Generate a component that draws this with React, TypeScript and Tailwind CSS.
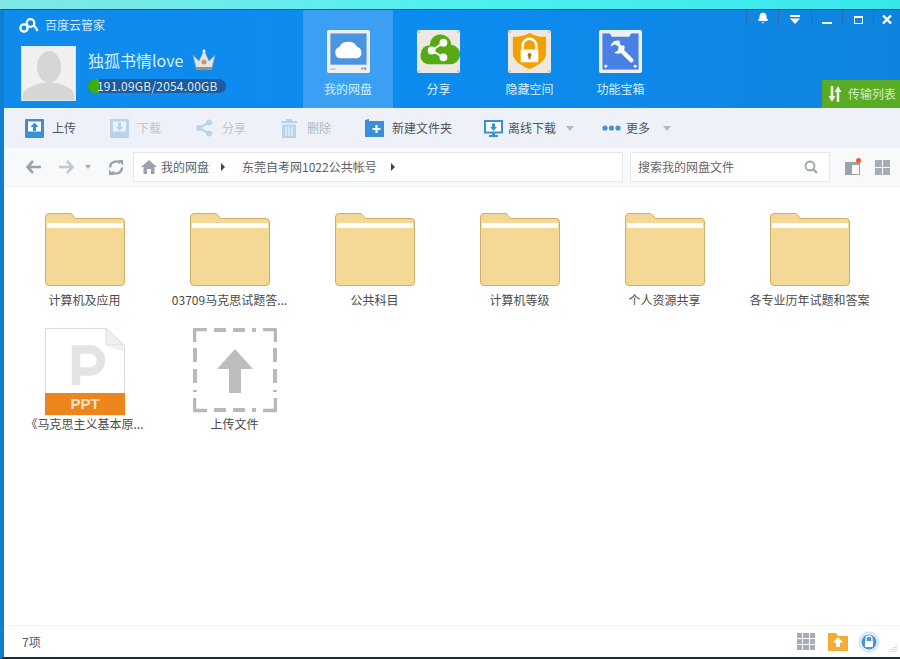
import { Bell } from "lucide-react";

const font = "font-['Noto_Sans_CJK_SC','Liberation_Sans',sans-serif]";

function Folder() {
  return (
    <svg width="82" height="80" viewBox="0 0 82 80" className="shrink-0">
      <path d="M1.500 5 Q1.500 1.500 5 1.500 H26 Q28 1.500 29 3.500 L31.500 6.500 H77 Q80.500 6.500 80.500 10 V70 Q80.500 73.500 77 73.500 H5 Q1.500 73.500 1.500 70 Z" fill="#f5d896" stroke="#cfae68" />
      <rect x="3" y="11" width="76" height="5" fill="#fff" />
    </svg>
  );
}

function PptFile() {
  return (
    <svg width="82" height="88" viewBox="0 0 82 88" className="shrink-0">
      <path d="M1.500 0.500 H62 L80.500 18 V87 H1.500 Z" fill="#fff" stroke="#dcdcdc" />
      <path d="M62 0.500 V17 H80.500 Z" fill="#f0f0f0" stroke="#dedede" />
      <path d="M63 18 H80 V24 Z" fill="#f2f2f2" />
      <path d="M32 57 V21.500 H46 A11 11 0 0 1 46 43.500 H36" fill="none" stroke="#e2e4e7" strokeWidth="8.500" />
      <rect x="1" y="65" width="80" height="22" fill="#ec851c" />
      <text x="41" y="81" textAnchor="middle" fontSize="15" fontWeight="700" fill="#fbe2c4" fontFamily="Liberation Sans">PPT</text>
    </svg>
  );
}

function UploadTile() {
  return (
    <svg width="84" height="88" viewBox="0 0 84 88" className="ml-[1px] shrink-0">
      <path d="M1.500 14 V1.500 H14" fill="none" stroke="#b9b9b9" strokeWidth="3.500" />
      <path d="M70 1.500 H82.500 V14" fill="none" stroke="#b9b9b9" strokeWidth="3.500" />
      <path d="M1.500 70 V82.500 H14" fill="none" stroke="#b9b9b9" strokeWidth="3.500" />
      <path d="M70 82.500 H82.500 V70" fill="none" stroke="#b9b9b9" strokeWidth="3.500" />
      <path d="M21 2 H63 M21 82 H63" stroke="#b9b9b9" strokeWidth="4" strokeDasharray="12 7" />
      <path d="M2 20 V64 M82 20 V64" stroke="#b9b9b9" strokeWidth="4" strokeDasharray="14 7" />
      <path d="M42 21 L60 41 H48 V65 H36 V41 H24 Z" fill="#bdbdbd" />
    </svg>
  );
}

function UploadIcon() {
  return (
    <svg width="19" height="19" viewBox="0 0 19 19">
      <rect width="19" height="19" rx="1" fill="#3a8fd6" />
      <rect x="3" y="2.500" width="13" height="10" fill="#fff" />
      <path d="M9.500 3.500 L13.500 8 H11 V12 H8 V8 H5.500 Z" fill="#3a8fd6" />
    </svg>
  );
}

function DownloadIcon() {
  return (
    <svg width="19" height="19" viewBox="0 0 19 19">
      <rect width="19" height="19" rx="1" fill="#b7d4ec" />
      <rect x="3" y="2.500" width="13" height="10" fill="#eef3f9" />
      <path d="M9.500 12 L13.500 7.500 H11 V3.500 H8 V7.500 H5.500 Z" fill="#b7d4ec" />
    </svg>
  );
}

function ShareIcon() {
  return (
    <svg width="18" height="18" viewBox="0 0 18 18">
      <path d="M14 3.500 L4 9 L14 14.500" fill="none" stroke="#b7d4ec" strokeWidth="2" />
      <circle cx="14" cy="3.500" r="3" fill="#b7d4ec" />
      <circle cx="4" cy="9" r="3" fill="#b7d4ec" />
      <circle cx="14" cy="14.500" r="3" fill="#b7d4ec" />
    </svg>
  );
}

function TrashIcon() {
  return (
    <svg width="16" height="19" viewBox="0 0 16 19">
      <path d="M0 2 H16 V4 H0 Z M5 0 H11 V2 H5 Z" fill="#b7d4ec" />
      <path d="M1 5.500 H15 V19 H1 Z" fill="#b7d4ec" />
      <path d="M5 7.500 V17 M8 7.500 V17 M11 7.500 V17" stroke="#eef3f9" strokeWidth="1.200" />
    </svg>
  );
}

function NewFolderIcon() {
  return (
    <svg width="19" height="18" viewBox="0 0 19 18">
      <path d="M0 1 L4 0 V18 H0 Z" fill="#3a8fd6" />
      <path d="M4 2 H19 V18 H4 Z" fill="#3a8fd6" />
      <path d="M11.500 6 V14 M7.500 10 H15.500" stroke="#fff" strokeWidth="2.200" />
    </svg>
  );
}

function OfflineIcon() {
  return (
    <svg width="19" height="17" viewBox="0 0 19 17">
      <rect x="1" y="1" width="17" height="11.500" fill="#fff" stroke="#3a8fd6" strokeWidth="2" />
      <path d="M9.500 11 L13 7 H11 V3.500 H8 V7 H6 Z" fill="#3a8fd6" />
      <path d="M8 13 H11 V15 H14 V17 H5 V15 H8 Z" fill="#3a8fd6" />
    </svg>
  );
}

function MoreDots() {
  return (
    <svg width="19" height="6" viewBox="0 0 19 6">
      <circle cx="3" cy="3" r="2.600" fill="#4a90d0" />
      <circle cx="9.500" cy="3" r="2.600" fill="#4a90d0" />
      <circle cx="16" cy="3" r="2.600" fill="#4a90d0" />
    </svg>
  );
}

function Caret() {
  return <span className="h-0 w-0 border-x-[4px] border-t-[5px] border-x-transparent border-t-[#b4b8bd]" />;
}

function CrumbArrow() {
  return <span className="h-0 w-0 border-y-[4px] border-l-[4px] border-y-transparent border-l-[#444]" />;
}

function TileDots() {
  return (
    <>
      <circle cx="2" cy="2" r="0.800" fill="#9a9a9a" />
      <circle cx="42" cy="2" r="0.800" fill="#9a9a9a" />
      <circle cx="2" cy="42" r="0.800" fill="#9a9a9a" />
      <circle cx="42" cy="42" r="0.800" fill="#9a9a9a" />
    </>
  );
}

function CloudTile() {
  return (
    <svg width="43" height="43" viewBox="0 0 44 44">
      <rect width="44" height="44" rx="2" fill="#eef0f2" />
      <rect x="3.500" y="3.500" width="37" height="32" fill="#4a95e0" />
      <path d="M13 29 A6 6 0 0 1 12.500 17.500 A10 9 0 0 1 31 17.500 A6 6 0 0 1 31 29 Z" fill="#fff" />
      <path d="M4 39 V41 M6 39 V41 M8 39 V41" stroke="#aaa" />
      <rect x="35" y="38.500" width="2" height="2" fill="#c8736a" />
      <rect x="38" y="38.500" width="2" height="2" fill="#777" />
    </svg>
  );
}

function ShareTile() {
  return (
    <svg width="43" height="43" viewBox="0 0 44 44">
      <rect width="44" height="44" rx="2" fill="#eee8e4" />
      <TileDots />
      <path d="M11 35 A8.500 8.500 0 0 1 4 24 A8 8 0 0 1 13 16 A11 11 0 0 1 35 15 A10 10 0 0 1 33 35 Z" fill="#56ab14" />
      <path d="M27 13 L15 21 L27 28" fill="none" stroke="#fff" strokeWidth="2" />
      <circle cx="27" cy="13" r="4" fill="#fff" />
      <circle cx="15" cy="21" r="4" fill="#fff" />
      <circle cx="27" cy="28" r="4" fill="#fff" />
    </svg>
  );
}

function LockTile() {
  return (
    <svg width="43" height="43" viewBox="0 0 44 44">
      <rect width="44" height="44" rx="2" fill="#eee8e4" />
      <TileDots />
      <path d="M5 7 Q15 7 22 3 Q29 7 39 7 V24 Q39 33 22 40 Q5 33 5 24 Z" fill="#f2a200" />
      <path d="M15 20 V16 A7 7 0 0 1 29 16 V20" fill="none" stroke="#fff" strokeWidth="2.500" />
      <rect x="13" y="20" width="18" height="13" rx="1" fill="#fff" />
      <circle cx="22" cy="25.500" r="2" fill="#b07800" />
      <rect x="21" y="26" width="2" height="4" fill="#b07800" />
    </svg>
  );
}

function ToolTile() {
  return (
    <svg width="43" height="43" viewBox="0 0 44 44">
      <rect width="44" height="44" rx="2" fill="#eef0f2" />
      <rect x="3.500" y="3.500" width="37" height="37" fill="#4a7fe6" />
      <path d="M11 3 H33 L31 7 H13 Z" fill="#eef0f2" />
      <circle cx="7" cy="37" r="1.500" fill="#fff" />
      <circle cx="37" cy="37" r="1.500" fill="#fff" />
      <path d="M24 22 L33 31" stroke="#fff" strokeWidth="4.500" strokeLinecap="round" />
      <path d="M21 11 A7 7 0 0 0 12 17 L16 14.500 L20 17 L19.500 21 L15.500 23 A7 7 0 0 0 25.500 21 A7 7 0 0 0 26 16 L22 15.500 Z" fill="#fff" />
    </svg>
  );
}

const tabs = [
  { label: "我的网盘", tile: <CloudTile />, box: "w-[90px] bg-[#3ba0f4]" },
  { label: "分享", tile: <ShareTile />, box: "w-[91px]" },
  { label: "隐藏空间", tile: <LockTile />, box: "w-[91px]" },
  { label: "功能宝箱", tile: <ToolTile />, box: "w-[91px]" },
];

const files = [
  { name: "计算机及应用", icon: <Folder />, box: "" },
  { name: "03709马克思试题答...", icon: <Folder />, box: "" },
  { name: "公共科目", icon: <Folder />, box: "" },
  { name: "计算机等级", icon: <Folder />, box: "" },
  { name: "个人资源共享", icon: <Folder />, box: "" },
  { name: "各专业历年试题和答案", icon: <Folder />, box: "" },
  { name: "《马克思主义基本原...", icon: <PptFile />, box: "" },
  { name: "上传文件", icon: <UploadTile />, box: "ml-[5px]" },
];

export default function App() {
  return (
    <div className={`flex h-[659px] w-[900px] flex-col overflow-hidden bg-white text-[12px] ${font}`}>
      <div className="h-[9px] shrink-0 bg-gradient-to-r from-[#7fe6e6] via-[#4fefef] to-[#37e6ea]" />
      <div className="flex min-h-0 flex-1 flex-col border-t border-b-2 border-l-4 border-t-[#14507f] border-b-[#1c2b3a] border-l-[#0f7fd0]">
        {/* header */}
        <div className="flex h-[98px] shrink-0 bg-gradient-to-r from-[#0f8bec] via-[#0c8cf0] to-[#0f84de] text-white">
          <div className="flex w-[299px] shrink-0 flex-col pl-[15px] pt-[5px]">
            <div className="flex h-[20px] items-center gap-[6px]">
              <svg width="20" height="17" viewBox="0 0 20 17">
                <circle cx="5" cy="11" r="3.600" fill="none" stroke="#fff" strokeWidth="2.400" />
                <circle cx="11.500" cy="6" r="3.800" fill="none" stroke="#fff" strokeWidth="2.200" />
                <path d="M14.500 8 C16 9.500 17.500 11 18.500 14" fill="none" stroke="#fff" strokeWidth="2.400" />
              </svg>
              <span className="text-[12px] text-[#cfe8fb]">百度云管家</span>
            </div>
            <div className="ml-[2px] mt-[11px] flex">
              <div className="h-[55px] w-[55px] border border-[#dfe6ea] bg-[#f0f0f0]">
                <svg width="53" height="53" viewBox="0 0 53 53">
                  <ellipse cx="27" cy="20" rx="12" ry="16" fill="#d6d6d6" />
                  <path d="M1 53 V46 Q5 40 19 36 H35 Q49 40 52 46 V53 Z" fill="#d6d6d6" />
                </svg>
              </div>
              <div className="ml-[12px] flex flex-col">
                <div className="flex h-[28px] items-center">
                  <span className="text-[16px] leading-none text-[#d8effd]">独孤书情love</span>
                  <svg width="24" height="24" viewBox="0 0 24 24" className="ml-[9px]">
                    <path d="M1 7 L7 13 L12 2 L17 13 L23 7 L20 20 H4 Z" fill="#dfe5ea" stroke="#8a9aa8" strokeWidth="0.600" />
                    <rect x="4" y="19" width="16" height="3" fill="#a89060" />
                    <circle cx="12" cy="14" r="2.500" fill="#c79a6a" />
                    <circle cx="12" cy="3" r="1.500" fill="#fff" />
                  </svg>
                </div>
                <div className="mt-[5px] flex h-[14px] w-[138px] items-center rounded-full bg-[#1d5a9e]">
                  <span className="h-full w-[11px] shrink-0 rounded-l-full bg-[#3fae10]" />
                  <span className="-ml-[2px] whitespace-nowrap text-[12px] leading-[14px] tracking-[0.2px] text-[#d8effd]">191.09GB/2054.00GB</span>
                </div>
              </div>
            </div>
          </div>
          <nav className="flex">
            {tabs.map((tab) => (
              <div key={tab.label} className={`flex h-[98px] flex-col items-center pt-[20px] ${tab.box}`}>
                {tab.tile}
                <span className="mt-[8px] text-[12px] leading-[16px] text-[#d8effd]">{tab.label}</span>
              </div>
            ))}
          </nav>
          <div className="flex flex-1 flex-col items-end justify-between">
            <div className="flex h-[14px]">
              <div className="flex w-[32px] items-end justify-center border-l border-[#2a6ea8]"><Bell size={12} fill="#fff" strokeWidth={2} /></div>
              <div className="flex w-[33px] items-end justify-center border-l border-[#2a6ea8]">
                <svg width="10" height="9" viewBox="0 0 10 9"><path d="M0 1 H10" stroke="#fff" strokeWidth="2" /><path d="M0 3.500 H10 L5 9 Z" fill="#fff" /></svg>
              </div>
              <div className="flex w-[31px] items-end justify-center border-l border-[#2a6ea8]"><span className="h-[2px] w-[10px] bg-white" /></div>
              <div className="flex w-[31px] items-end justify-center border-l border-[#2a6ea8]"><span className="h-[8px] w-[9px] border border-t-2 border-white" /></div>
              <div className="flex w-[27px] items-end justify-center border-l border-[#2a6ea8]">
                <svg width="10" height="9" viewBox="0 0 10 9"><path d="M1 0.500 L9 8.500 M9 0.500 L1 8.500" stroke="#fff" strokeWidth="2.400" /></svg>
              </div>
            </div>
            <div className="flex h-[28px] w-[78px] items-center bg-[#5aab24] pl-[6px]">
              <svg width="14" height="16" viewBox="0 0 14 16">
                <path d="M4 0 V12" stroke="#f4f4e8" strokeWidth="2.500" />
                <path d="M4 16 L0.500 10 H7.500 Z" fill="#f4f4e8" />
                <path d="M10 16 V4" stroke="#f4f4e8" strokeWidth="2.500" />
                <path d="M10 0 L6.500 6 H13.500 Z" fill="#f4f4e8" />
              </svg>
              <span className="ml-[6px] whitespace-nowrap text-[12px] text-[#d8ecc8]">传输列表</span>
            </div>
          </div>
        </div>

        {/* toolbar */}
        <div className="flex h-[40px] shrink-0 items-center bg-[#eef2f8] text-[12px] text-[#4b5560]">
          <div className="ml-[21px] flex w-[85px] items-center gap-[8px]"><UploadIcon /><span>上传</span></div>
          <div className="flex w-[85px] items-center gap-[8px] text-[#c0c6cc]"><DownloadIcon /><span>下载</span></div>
          <div className="flex w-[86px] items-center gap-[9px] text-[#c0c6cc]"><ShareIcon /><span>分享</span></div>
          <div className="flex w-[84px] items-center gap-[10px] text-[#b4bac0]"><TrashIcon /><span>删除</span></div>
          <div className="flex w-[119px] items-center gap-[8px]"><NewFolderIcon /><span>新建文件夹</span></div>
          <div className="flex w-[118px] items-center gap-[5px]"><OfflineIcon /><span>离线下载</span><span className="ml-[5px] flex"><Caret /></span></div>
          <div className="flex items-center gap-[5px]"><MoreDots /><span>更多</span><span className="ml-[8px] flex"><Caret /></span></div>
        </div>

        {/* nav */}
        <div className="flex h-[39px] shrink-0 items-center border-b border-[#eef0f2] bg-[#f7f9fb]">
          <svg width="16" height="14" viewBox="0 0 16 14" className="ml-[22px]">
            <path d="M7 1 L1.500 7 L7 13 M2 7 H15" fill="none" stroke="#9aa3ab" strokeWidth="2.600" />
          </svg>
          <svg width="16" height="14" viewBox="0 0 16 14" className="ml-[16px]">
            <path d="M9 1 L14.500 7 L9 13 M14 7 H1" fill="none" stroke="#c3c9cf" strokeWidth="2.600" />
          </svg>
          <span className="ml-[11px] flex"><span className="h-0 w-0 border-x-[3.500px] border-t-[4px] border-x-transparent border-t-[#a4aab0]" /></span>
          <svg width="16" height="17" viewBox="0 0 16 17" className="ml-[17px]">
            <path d="M2 8.500 A6 6 0 0 1 12 4 M14 8.500 A6 6 0 0 1 4 13" fill="none" stroke="#9aa3ab" strokeWidth="2.400" />
            <path d="M10 1 H15 V6.500 Z M6 16 H1 V10.500 Z" fill="#9aa3ab" />
          </svg>
          <div className="ml-[9px] flex h-[30px] w-[490px] items-center border border-[#e6e8ea] bg-white pl-[7px] text-[12px] text-[#5a5f66]">
            <svg width="16" height="14" viewBox="0 0 16 14">
              <path d="M8 0 L16 7 H13.500 V14 H10 V9 H6 V14 H2.500 V7 H0 Z" fill="#9aa3ab" />
            </svg>
            <span className="ml-[4px]">我的网盘</span>
            <span className="ml-[12px] flex"><CrumbArrow /></span>
            <span className="ml-[17px]">东莞自考网1022公共帐号</span>
            <span className="ml-[14px] flex"><CrumbArrow /></span>
          </div>
          <div className="ml-[7px] flex h-[30px] w-[200px] items-center justify-between border border-[#e6e8ea] bg-white pl-[7px] pr-[11px] text-[12px] text-[#666]">
            <span>搜索我的网盘文件</span>
            <svg width="14" height="14" viewBox="0 0 14 14">
              <circle cx="6" cy="6" r="4.500" fill="none" stroke="#9aa3ab" strokeWidth="1.800" />
              <path d="M9.500 9.500 L13 13" stroke="#9aa3ab" strokeWidth="2.200" />
            </svg>
          </div>
          <div className="relative ml-[15px] flex">
            <svg width="15" height="15" viewBox="0 0 15 15">
              <path d="M0.500 2.500 H14.500 V14.500 H0.500 Z" fill="#fff" stroke="#9aa3ab" />
              <rect x="0" y="2" width="15" height="3" fill="#9aa3ab" />
              <rect x="0" y="5" width="7" height="10" fill="#9aa3ab" />
            </svg>
            <span className="absolute -right-[1px] -top-[2px] h-[5px] w-[5px] rounded-full bg-[#f05a28]" />
          </div>
          <div className="ml-[15px] grid grid-cols-2 gap-[1px]">
            <span className="h-[7px] w-[7px] bg-[#a6adb4]" />
            <span className="h-[7px] w-[7px] bg-[#a6adb4]" />
            <span className="h-[7px] w-[7px] bg-[#a6adb4]" />
            <span className="h-[7px] w-[7px] bg-[#a6adb4]" />
          </div>
        </div>

        {/* files */}
        <div className="min-h-0 flex-1 bg-white pl-[8px] pt-[25px]">
          <div className="grid w-[870px] grid-cols-6 [grid-auto-rows:116px]">
            {files.map((file) => (
              <div key={file.name} className={`flex w-[145px] flex-col items-center ${file.box}`}>
                {file.icon}
                <span className="whitespace-nowrap text-[12px] leading-[16px] text-[#4a4a4a]">{file.name}</span>
              </div>
            ))}
          </div>
        </div>

        {/* status bar */}
        <div className="flex h-[32px] shrink-0 items-center border-t border-[#f1f2f3] bg-white pl-[18px] pr-[3px]">
          <span className="text-[12px] text-[#4f5a66]">7项</span>
          <div className="ml-auto flex items-center">
            <div className="grid grid-cols-3 gap-[1px]">
              {[0, 1, 2, 3, 4, 5, 6, 7, 8].map((n) => (
                <span key={n} className="h-[5.300px] w-[5.300px] bg-[#a6adb4]" />
              ))}
            </div>
            <svg width="20" height="18" viewBox="0 0 20 18" className="ml-[13px]">
              <path d="M0 0 H8 L10 3 H20 V18 H0 Z" fill="#f5ac35" />
              <path d="M10 4 L15 9.500 H12 V14 H8 V9.500 H5 Z" fill="#fff" />
            </svg>
            <svg width="22" height="22" viewBox="0 0 22 22" className="ml-[10px]">
              <circle cx="11" cy="11" r="10" fill="#e3f0fa" stroke="#c9dff0" />
              <circle cx="11" cy="11" r="7.500" fill="#4a95d6" />
              <path d="M8 10 V8 A3 3 0 0 1 14 8 V10" fill="none" stroke="#fff" strokeWidth="1.300" />
              <rect x="7" y="10" width="8" height="6" fill="#fff" />
            </svg>
            <svg width="8" height="9" viewBox="0 0 8 9" className="ml-[9px] self-end">
              <path d="M7 1 V2 M5 3 V4 M7 3 V4 M3 5 V6 M5 5 V6 M7 5 V6 M1 7 V8 M3 7 V8 M5 7 V8 M7 7 V8" stroke="#b5b5b5" />
            </svg>
          </div>
        </div>
      </div>
    </div>
  );
}
